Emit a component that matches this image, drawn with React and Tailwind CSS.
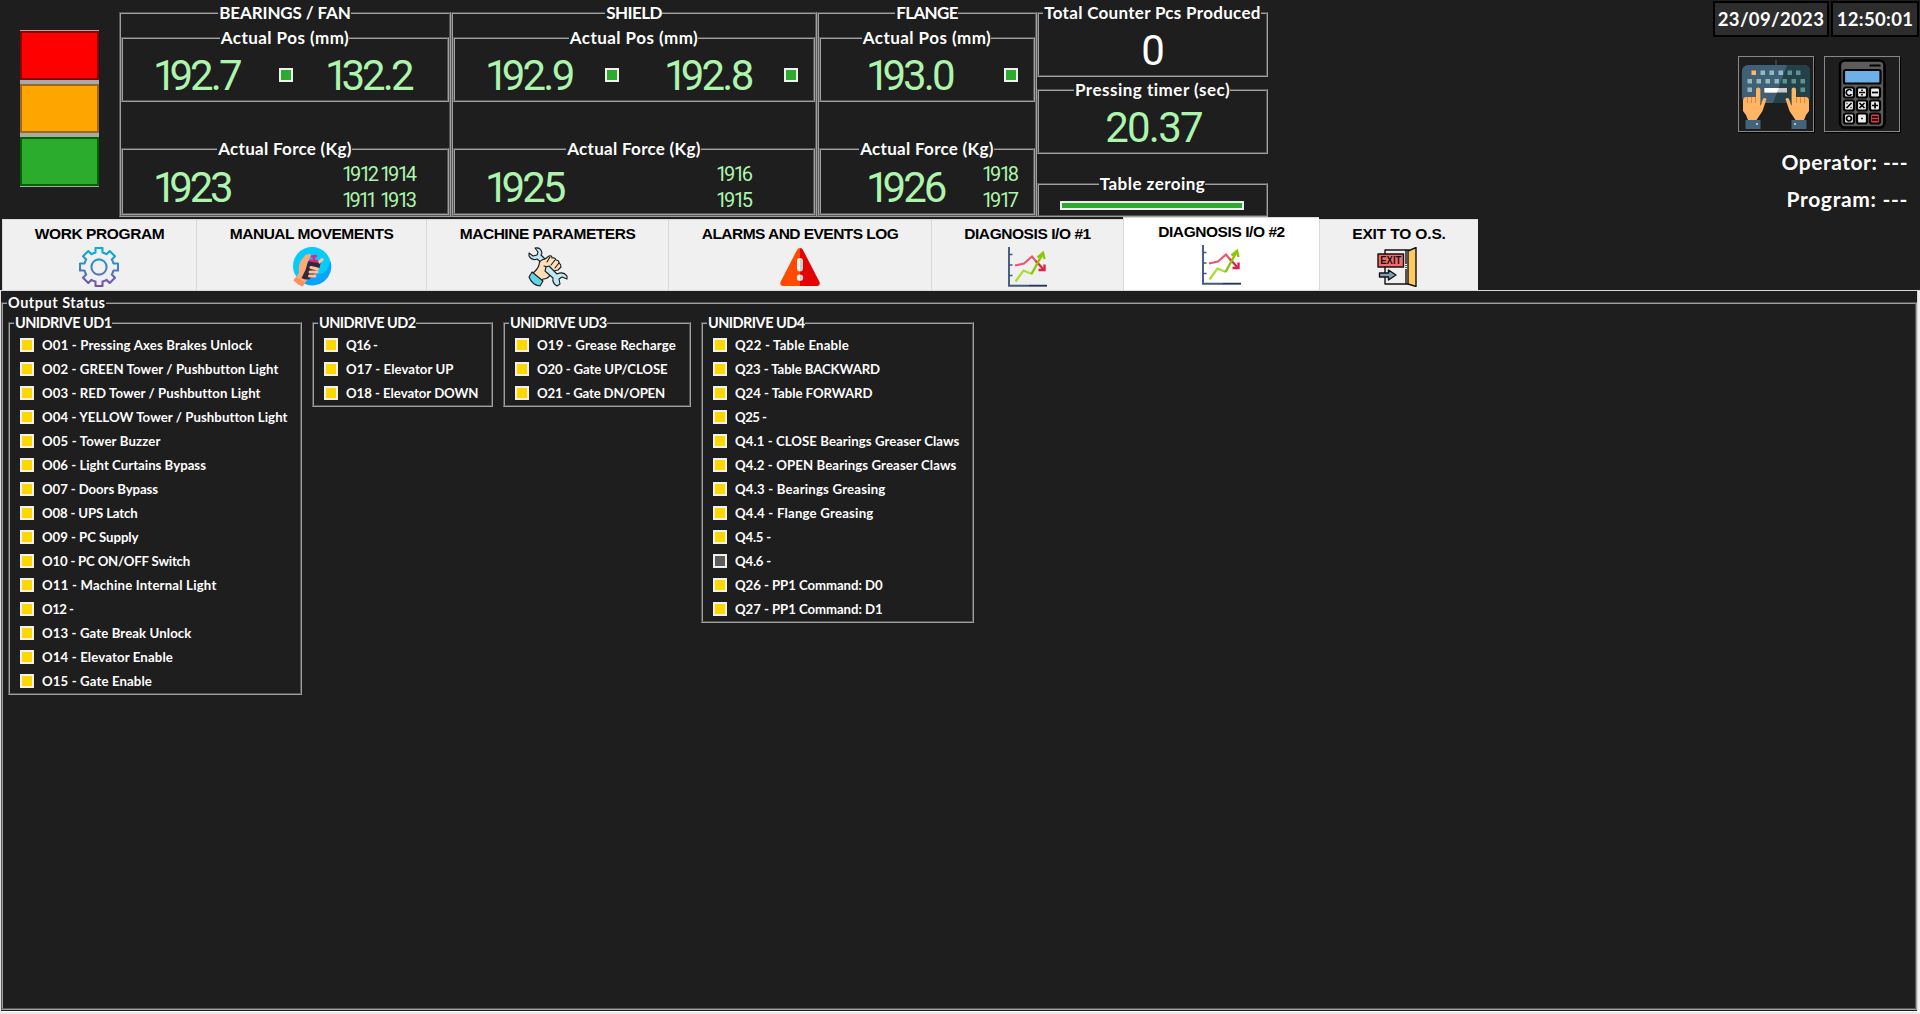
import React, { useLayoutEffect, useRef, useState } from "react";

/* Text set to an exact width by spreading the difference between its letters. */
function T({ w, children, className = "" }) {
  const ref = useRef(null);
  const [ls, setLs] = useState(0);
  useLayoutEffect(() => {
    const el = ref.current;
    const n = el.textContent.length;
    if (w) setLs((w + 0.5 - el.getBoundingClientRect().width) / n);
  }, [w]);
  return (
    <span ref={ref} className={"inline-block whitespace-pre " + className} style={{ letterSpacing: ls + "px", "--ls": ls + "px" }}>
      {children}
    </span>
  );
}

function Num({ v, w, small, white, className = "" }) {
  return (
    <div className={"flex " + className}>
      <T
        w={w + 4}
        className={
          "font-['Roboto',sans-serif] " +
          (small ? "-ml-0.5 text-[20px] leading-[15px] font-normal " : v[0] === "1" ? "-ml-1 text-[42px] leading-[31px] font-normal " : "text-[42px] leading-[31px] font-normal ") +
          (white ? "text-white" : "text-[#adf5ad]")
        }
      >
        {v.split("").map((c, i) =>
          c === "1" ? (
            <span key={i} className="tracking-[calc(var(--ls,0px)-0.1em)]">1</span>
          ) : (
            <span key={i}>{c}</span>
          )
        )}
      </T>
    </div>
  );
}

function Group({ title, tw, size = "lg", className = "", left, children }) {
  return (
    <div className={"relative border border-t-[#565656] border-l-[#565656] border-b-[#a0a0a0] border-r-[#a0a0a0] " + className}>
      <div className="h-full border border-t-[#a0a0a0] border-l-[#a0a0a0] border-b-[#565656] border-r-[#565656]">{children}</div>
      <div className={"absolute -top-[11px] left-0 right-0 flex h-[22px] items-center " + (left ? "pl-[5px]" : "justify-center pr-px")}>
        <T
          w={tw}
          className={"bg-[#1e1e1e] pl-px font-bold text-white " + (size === "lg" ? "text-[17px] leading-[22px]" : "text-[14.5px] leading-[20px]")}
        >
          {title}
        </T>
      </div>
    </div>
  );
}

const Led = ({ color = "bg-[#2cac2c]", className = "" }) => (
  <div className={"size-[14px] shrink-0 border-2 border-[#f0f0f0] " + color + " " + className} />
);

function Axis({ title, tw, className, pos, force }) {
  return (
    <Group title={title} tw={tw} className={"h-[205px] " + className}>
      <div className="flex h-full flex-col justify-between pt-[23px]">
        <Group title="Actual Pos (mm)" tw={129} className="h-[65px]">
          <div className="flex items-start pt-[21px]">{pos}</div>
        </Group>
        <Group title="Actual Force (Kg)" tw={134} className="h-[67px]">
          <div className="flex items-start">{force}</div>
        </Group>
      </div>
    </Group>
  );
}

const Gear = () => (
  <svg viewBox="0 0 40 40" className="mr-0.5 size-10" fill="none" stroke="url(#gg)" strokeWidth="2.1" strokeLinejoin="round">
    <defs>
      <linearGradient id="gg" x1="0" y1="0" x2="0" y2="40" gradientUnits="userSpaceOnUse">
        <stop offset="0" stopColor="#00b5d8" />
        <stop offset=".5" stopColor="#3e86c4" />
        <stop offset="1" stopColor="#7a4fa8" />
      </linearGradient>
    </defs>
    <path d="M16.500 1h7v4.500q2.200.6 4 1.700l3.200-3.200 5.300 5.300-3.200 3.200q1.100 1.800 1.700 4H39v7h-4.500q-.6 2.200-1.700 4l3.200 3.200-5.300 5.300-3.200-3.200q-1.800 1.100-4 1.700V39h-7v-4.500q-2.200-.6-4-1.700L9.300 36 4 30.700l3.200-3.200q-1.100-1.800-1.700-4H1v-7h4.500q.6-2.200 1.700-4L4 9.300 9.300 4l3.200 3.200q1.800-1.100 4-1.700z" />
    <circle cx="20" cy="20" r="7.600" />
  </svg>
);

const HandRemote = () => (
  <svg viewBox="0 0 40 40" className="size-10">
    <circle cx="20" cy="19" r="19" fill="#06cbfb" />
    <path d="M38.500 14A19 19 0 0 1 12 36.500L24 26c8 3 12-3 14.500-12z" fill="#0aa5fb" />
    <path d="M1.500 33.500L7 26q-1-7 1.500-12L13 8.500q3-2.500 5.500-1.500 1 1-1 4l-2 6-1 9 1 6-5 7.500q-5-2-9-6z" fill="#ffa977" />
    <path d="M1.500 33.500L4 30l9 5.500-2.500 4q-5-2-9-6z" fill="#ff8f5e" />
    <path d="M16 14.500q5-3 10.500-.5l2 2.500q0 3-2.500 6l-8 9.500q-4 1.500-8.500-1l4-8z" fill="#31293a" />
    <path d="M20 9.500l4-.5M22 9.500v4M18.500 13.500l7 1" stroke="#ef1e81" strokeWidth="2.400" strokeLinecap="round" />
    <path d="M26 14l3.500-3q3 0 2 2.500L27 17z" fill="#ffc09a" />
    <g stroke="#ffc09a" strokeWidth="3" strokeLinecap="round">
      <path d="M19 20.500l6.500 1.500M18 25l7 0M17.500 29l5.500 0" />
    </g>
  </svg>
);

const HandWrench = () => (
  <svg viewBox="0 0 40 40" className="size-10" stroke="#1b1b1b" strokeWidth="1.100" strokeLinejoin="round" strokeLinecap="round">
    <path d="M7 1q6-1 7 5l-1 2 5 5-3 4-6-5q-5 2-8-3l0-3 4 3 4-1 1-3z" fill="#bfe9f7" />
    <path d="M4 27q6-5 7-9 0-5 6-6l4-3q3-1 3 2 3-1 4 2 3 0 3 3 2 1 2 4l-3 3-4 1-4 4q-2 4-7 4l-2 3z" fill="#ffdfba" />
    <path d="M19 15l3-5M23 18l4-5M27 21l4-5M16 19l4 1 3 3" fill="none" />
    <path d="M18 20l3-1 8 8q6-3 10 2l0 3-5-2-3 2 1 5-3 2q-5-3-4-8l-8-7z" fill="#bfe9f7" />
    <path d="M4 25l11 9-3 5q-8-1-11-9z" fill="#63d3e6" />
  </svg>
);

const Warning = () => (
  <svg viewBox="0 0 40 40" className="mr-px size-10">
    <path d="M20 1q2 0 3 2l16.500 32q1 4-2.500 4H20z" fill="#e20404" />
    <path d="M20 1q-2 0-3 2L.5 35q-1 4 2.500 4H20z" fill="#ff4b00" />
    <path d="M20 11q-3 0-3 3v7q0 3.500 3 3.500zM20 27.500a3.200 3.200 0 0 0 0 6.400z" fill="#f5f0f0" />
    <path d="M20 11q3 0 3 3v7q0 3.500-3 3.500zM20 27.500a3.200 3.200 0 0 1 0 6.400z" fill="#d6cfcf" />
  </svg>
);

const Chart = () => (
  <svg viewBox="0 0 40 40" className="mr-0.5 size-10" fill="none">
    <path d="M2 0v38.700H22" stroke="#3f5a80" strokeWidth="1.900" />
    <path d="M22 38.700h18" stroke="#26384f" strokeWidth="1.900" />
    <path d="M2 7.500h3.500M2 18h3.500M2 28.500h3.500" stroke="#3f5a80" strokeWidth="1.600" />
    <path d="M8 18.500l9-2 8-7 5 6" stroke="#ee5570" strokeWidth="2.200" />
    <path d="M29 14l8 9" stroke="#df2244" strokeWidth="2.200" />
    <path d="M37.500 17.500v5.500h-6" fill="none" stroke="#df2244" strokeWidth="2.400" />
    <path d="M8.500 34.500l8-11 8.500 3.500" stroke="#aadd33" strokeWidth="2.200" />
    <path d="M24.500 27L35 8" stroke="#8fc400" strokeWidth="2.400" />
    <path d="M30.500 10.500l5.500-4.500 1.500 6" stroke="#8fc400" strokeWidth="2.400" />
  </svg>
);

const Exit = () => (
  <svg viewBox="0 0 40 40" className="mr-1 size-10" stroke="#111" strokeWidth="1.400" strokeLinejoin="round">
    <path d="M8 3h24v34H8z" fill="#f0f0f0" />
    <path d="M29 3v34" />
    <path d="M31 4l8-3.500v39L31 37z" fill="#ffca5e" />
    <path d="M29 17v5" stroke="#f0f0f0" strokeWidth="2" strokeDasharray="1 1" />
    <path d="M1 7h25.500v13H1z" fill="#f56b6b" />
    <text x="13.800" y="17.400" fontSize="10.500" fontWeight="700" textAnchor="middle" textLength="21" lengthAdjust="spacingAndGlyphs" fill="#111" stroke="none" fontFamily="Liberation Sans, sans-serif">EXIT</text>
    <path d="M2.500 26h9v-3l7.500 5-7.500 5v-3h-9z" fill="#7f9fb3" />
  </svg>
);

const Keyboard = () => (
  <svg viewBox="0 0 74 74" className="size-[74px]">
    <path d="M37 3v5" stroke="#26454d" strokeWidth="2" />
    <rect x="3" y="8" width="68" height="38" rx="6" fill="#416075" />
    <path d="M48 8h17q6 0 6 6v26q0 6-6 6H34z" fill="#24414a" />
    <rect x="12.500" y="13.500" width="4.500" height="4.500" fill="#ffb564" />
    <g fill="#8fbcc4">
      {[21.5, 30.5, 39.5].map((x) => <rect key={x} x={x} y="13.500" width="4.500" height="4.500" />)}
      {[8.5, 17.5, 26.5, 35.5].map((x) => <rect key={x} x={x} y="22" width="4.500" height="4.500" />)}
      <rect x="8.500" y="30.500" width="4.500" height="4.500" />
    </g>
    <g fill="#5a9490">
      {[48.5, 57].map((x) => <rect key={x} x={x} y="13.500" width="4.500" height="4.500" />)}
      {[43.5, 52.5, 61.5].map((x) => <rect key={x} x={x} y="22" width="4.500" height="4.500" />)}
      <rect x="61.500" y="30.500" width="4.500" height="4.500" />
    </g>
    <rect x="25.500" y="31" width="22.500" height="4.500" fill="#c9c9c9" />
    <path d="M25.500 31H40l-2 4.500H25.500z" fill="#fff" />
    {[false, true].map((flip) => (
      <g key={String(flip)} transform={flip ? "translate(74 0) scale(-1 1)" : undefined}>
        <path d="M4 44q0-4 3.500-4h9.500v-7.500q0-2 2.200-2t2.200 2V49l2.600-7q1.500-2 3.500 0l-4 12-6 9H9l-2-5-3-4z" fill="#ffb564" />
        <path d="M8.500 40v6M12.500 40v6M16.500 40v6" stroke="#e8892f" strokeWidth="1" />
        <rect x="6.500" y="63" width="15" height="9" fill="#456377" />
        <rect x="17" y="66" width="2" height="2" fill="#9fc4d6" />
      </g>
    ))}
  </svg>
);

const keyMarks = [
  "M2.600-1.800A3 3 0 1 0 2.600 1.800", "M-3 0h6M0-3v1.500M0 1.500V3", "M-3 0h6",
  "M-2.500 2.500l5-5M-2.500-2h1M1.500 2h1", "M-2.500-2.500l5 5M2.500-2.500l-5 5", "M-3 0h6M0-3v6",
  "M0-2.500A2.500 2.500 0 1 0 .01-2.500", "M-.8 0h1.600", "M-3-1.500h6M-3 1.500h6",
];
const Calculator = () => (
  <svg viewBox="0 0 74 74" className="size-[74px]">
    <rect x="15" y="3.500" width="44.500" height="67" rx="5" fill="#5c5c5c" stroke="#000" strokeWidth="2.600" />
    <path d="M44.500 8.500h11" stroke="#000" strokeWidth="2" />
    <rect x="19" y="13" width="36.500" height="13.500" rx="1.500" fill="#6db0e8" stroke="#000" strokeWidth="2.200" />
    {keyMarks.map((d, i) => (
      <g key={i} transform={`translate(${24 + (i % 3) * 13} ${35.5 + Math.floor(i / 3) * 13})`}>
        <rect x="-5" y="-5" width="10" height="10" rx="2" fill={i === 8 ? "#e04040" : "#ededed"} stroke="#000" strokeWidth="2.200" />
        <path d={d} fill="none" stroke="#000" strokeWidth="1.700" />
      </g>
    ))}
  </svg>
);

const tabs = [
  ["WORK PROGRAM", 129, "w-[194px]", Gear],
  ["MANUAL MOVEMENTS", 163, "w-[230px]", HandRemote],
  ["MACHINE PARAMETERS", 175, "w-[242px]", HandWrench],
  ["ALARMS AND EVENTS LOG", 196, "w-[263px]", Warning],
  ["DIAGNOSIS I/O #1", 126, "w-[192px]", Chart],
  ["DIAGNOSIS I/O #2", 126, "w-[196px]", Chart],
  ["EXIT TO O.S.", 93, "w-[159px]", Exit],
];

const drives = [
  ["UNIDRIVE UD1", "w-[294px] h-[373px]", [
    ["O01 - Pressing Axes Brakes Unlock", 210], ["O02 - GREEN Tower / Pushbutton Light", 235.5],
    ["O03 - RED Tower / Pushbutton Light", 217.5], ["O04 - YELLOW Tower / Pushbutton Light", 244.5],
    ["O05 - Tower Buzzer", 118], ["O06 - Light Curtains Bypass", 163.5], ["O07 - Doors Bypass", 115.5],
    ["O08 - UPS Latch", 95], ["O09 - PC Supply", 96], ["O10 - PC ON/OFF Switch", 147.5],
    ["O11 - Machine Internal Light", 174], ["O12 -", 31], ["O13 - Gate Break Unlock", 149],
    ["O14 - Elevator Enable", 130.5], ["O15 - Gate Enable", 109.5]]],
  ["UNIDRIVE UD2", "w-[181px] h-[85px]", [["Q16 -", 31], ["O17 - Elevator UP", 107], ["O18 - Elevator DOWN", 132]]],
  ["UNIDRIVE UD3", "w-[188px] h-[85px]", [["O19 - Grease Recharge", 138.5], ["O20 - Gate UP/CLOSE", 130], ["O21 - Gate DN/OPEN", 127.5]]],
  ["UNIDRIVE UD4", "w-[273px] h-[301px]", [
    ["Q22 - Table Enable", 113.5], ["Q23 - Table BACKWARD", 144.5], ["Q24 - Table FORWARD", 137], ["Q25 -", 31],
    ["Q4.1 - CLOSE Bearings Greaser Claws", 224], ["Q4.2 - OPEN Bearings Greaser Claws", 221],
    ["Q4.3 - Bearings Greasing", 150], ["Q4.4 - Flange Greasing", 138], ["Q4.5 -", 35.5],
    ["Q4.6 -", 35.5, true], ["Q26 - PP1 Command: D0", 147], ["Q27 - PP1 Command: D1", 147]]],
];

export default function App() {
  return (
    <div className="flex h-[1014px] w-[1920px] flex-col overflow-hidden bg-[#1e1e1e] font-['Lato',sans-serif] text-white">
      <header className="flex h-[217px] shrink-0 items-start">
        <div className="mt-[30px] ml-5 flex h-[157px] w-[79px] flex-col justify-between bg-[#a9a9a9] py-px">
          <div className="h-[49px] border-2 border-[#8b0000] bg-[#ff0000]" />
          <div className="h-[49px] border-2 border-[#a0661e] bg-[#ffa500]" />
          <div className="h-[49px] border-2 border-[#006400] bg-[#2cac2c]" />
        </div>

        <div className="mt-3 ml-5 flex">
          <Axis title="BEARINGS / FAN" tw={132} className="w-[332px]"
            pos={<><Num v="192.7" w={82} className="ml-[34px] w-[122px]" /><Led className="mt-2" /><Num v="132.2" w={82} className="ml-9" /></>}
            force={<>
              <Num v="1923" w={73} className="mt-[22px] ml-[34px] w-[187px]" />
              <div className="mt-[17px] grid grid-cols-[38px_32px] gap-y-[11px]">
                <Num small v="1912" w={31} /><Num small v="1914" w={31} />
                <Num small v="1911" w={27} /><Num small v="1913" w={31} />
              </div>
            </>} />
          <Axis title="SHIELD" tw={56} className="w-[366px]"
            pos={<><Num v="192.9" w={83} className="ml-[34px] w-[116px]" /><Led className="mt-2" /><Num v="192.8" w={83} className="ml-[49px] w-[116px]" /><Led className="mt-2" /></>}
            force={<>
              <Num v="1925" w={74} className="mt-[22px] ml-[34px] w-[229px]" />
              <div className="mt-[17px] grid gap-y-[11px]"><Num small v="1916" w={31} /><Num small v="1915" w={31} /></div>
            </>} />
          <Axis title="FLANGE" tw={62} className="w-[220px]"
            pos={<><Num v="193.0" w={82} className="ml-[49px] w-[134px]" /><Led className="mt-2" /></>}
            force={<>
              <Num v="1926" w={74} className="mt-[22px] ml-[49px] w-[114px]" />
              <div className="mt-[17px] grid gap-y-[11px]"><Num small v="1918" w={31} /><Num small v="1917" w={31} /></div>
            </>} />
          <div className="flex w-[231px] flex-col">
            <Group title="Total Counter Pcs Produced" tw={217} className="h-[65px]">
              <Num v="0" w={20} white className="justify-center pt-[21px] pl-0.5" />
            </Group>
            <Group title="Pressing timer (sec)" tw={156} className="mt-3 h-[65px]">
              <Num v="20.37" w={92} className="justify-center pt-[21px] pl-0.5" />
            </Group>
            <Group title="Table zeroing" tw={106} className="mt-[29px] h-[34px]">
              <div className="mt-4 ml-[21px] h-[9px] w-[184px] border-2 border-[#f0f0f0] bg-[#2cac2c]" />
            </Group>
          </div>
        </div>

        <div className="ml-auto flex flex-col items-end">
          <div className="mt-px mr-px flex gap-0.5 text-[18.5px] font-bold">
            <div className="flex h-9 w-[116px] items-center justify-center border-2 border-black bg-[#2d2d2d] pt-0.5"><T w={106}>23/09/2023</T></div>
            <div className="flex h-9 w-[88px] items-center justify-center border-2 border-black bg-[#2d2d2d] pt-0.5"><T w={76}>12:50:01</T></div>
          </div>
          <div className="mt-[19px] mr-5 flex gap-2.5">
            <div className="size-[76px] border border-[#888] shadow-[1px_1px_0_#000]"><Keyboard /></div>
            <div className="size-[76px] border border-[#888] shadow-[1px_1px_0_#000]"><Calculator /></div>
          </div>
          <div className="mt-[11px] mr-3 flex flex-col items-end text-[21px] leading-[37px] font-bold">
            <T w={126}>Operator: ---</T>
            <T w={121}>Program: ---</T>
          </div>
        </div>
      </header>

      <nav className="flex h-[73px] shrink-0 items-end pl-0.5">
        {tabs.map(([label, w, width, Icon], i) => (
          <div
            key={label}
            className={
              "flex flex-col items-center border-l border-t border-[#d9d9d9] font-['Liberation_Sans',sans-serif] text-[15.5px] leading-5 font-bold text-black " +
              width + (i === 5 ? " h-[73px] bg-white pt-1" : " h-[71px] bg-[#f0f0f0] pt-1")
            }
          >
            <T w={w}>{label}</T>
            <div className="mt-[3px]"><Icon /></div>
          </div>
        ))}
      </nav>

      <main className="flex h-[724px] shrink-0 flex-col border-l border-t border-l-[#e4e4e4] border-t-[#d9d9d9] bg-[#1e1e1e]">
        <div className="flex">
          <div className="h-[719px] w-[1916px] pt-[11px]">
            <Group title="Output Status" tw={98} size="sm" left className="h-[708px]">
              <div className="flex items-start pt-[18px] pl-[5px]">
                {drives.map(([title, cls, rows], i) => (
                  <Group key={title} title={title} tw={97} size="sm" left className={cls + (i ? " ml-2.5" : "")}>
                    <div className="flex flex-col gap-2.5 pt-3.5 pl-2.5">
                      {rows.map(([t, w, off]) => (
                        <div key={t} className="flex h-3.5 items-center gap-2 text-[13.2px] leading-3.5 font-bold">
                          <Led color={off ? "bg-[#5f5b5b]" : "bg-[#ffd700]"} />
                          <T w={w}>{t}</T>
                        </div>
                      ))}
                    </div>
                  </Group>
                ))}
              </div>
            </Group>
          </div>
          <div className="h-[720px] w-[3px] border-l border-[#d9d9d9] bg-[#f0f0f0]" />
        </div>
        <div className="h-[2px] bg-white" />
        <div className="h-[3px] bg-[#e8e8e8]" />
      </main>
    </div>
  );
}
